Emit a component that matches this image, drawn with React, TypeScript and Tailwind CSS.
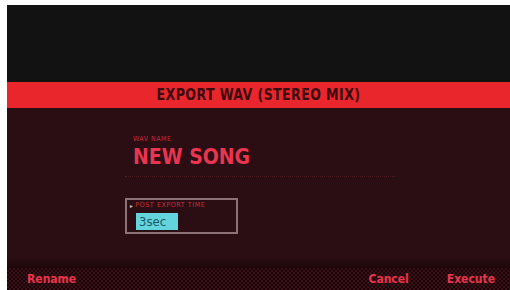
export default function App() {
  return (
    <div className="w-[510px] h-[290px] bg-white pl-[7px] pt-[5px] overflow-hidden">
      <div className="h-full flex flex-col bg-[#2a0e13] font-['DejaVu_Sans_Condensed','DejaVu_Sans',sans-serif]">
        {/* top blank */}
        <div className="h-[77px] bg-[#121212]" />

        {/* title bar */}
        <div className="h-[26px] bg-[#e8262c] flex items-center justify-center">
          <span className="text-[14px] font-bold text-[#3c0b10] tracking-[0.4px] scale-y-110">
            EXPORT WAV (STEREO MIX)
          </span>
        </div>

        {/* body */}
        <div className="flex-1 flex flex-col pl-[126px] pt-[28px]">
          <div className="text-[7px] leading-none text-[#c92a3e] tracking-[0.5px]">WAV NAME</div>
          <div className="mt-[4px] text-[21px] leading-none font-bold text-[#ea3550]">
            NEW SONG
          </div>
          <div className="mt-[8px] -ml-[8px] w-[270px] border-b border-dotted border-[#4a1c22]" />

          <div className="mt-[21px] -ml-[8px] w-[113px] h-[36px] border-2 border-[#8c7276] px-[3px] pt-[2px]">
            <div className="flex items-center gap-[2px] text-[7px] leading-none text-[#c9303f] tracking-[0.6px]">
              <span className="text-[6px] text-[#d8c8c8]">▸</span>
              POST EXPORT TIME
            </div>
            <div className="mt-[4px] ml-[6px] w-[42px] h-[17px] bg-[#63d4dc] flex items-center pl-[3px]">
              <span className="text-[13px] text-[#1c5a64] leading-none">3sec</span>
            </div>
          </div>
        </div>

        {/* fade */}
        <div className="h-[12px] bg-gradient-to-b from-[#2a0e13] to-[#1e080b]" />

        {/* bottom function bar */}
        <div className="h-[22px] flex items-center pl-[20px] pr-[15px] bg-[#1c0609] bg-[repeating-conic-gradient(#3d0f16_0%_25%,#160406_0%_50%)] bg-[length:4px_4px]">
          <span className="text-[12px] font-bold text-[#e8354c]">Rename</span>
          <span className="ml-auto text-[12px] font-bold text-[#e8354c]">Cancel</span>
          <span className="ml-[38px] text-[12px] font-bold text-[#e8354c]">Execute</span>
        </div>
      </div>
    </div>
  );
}
